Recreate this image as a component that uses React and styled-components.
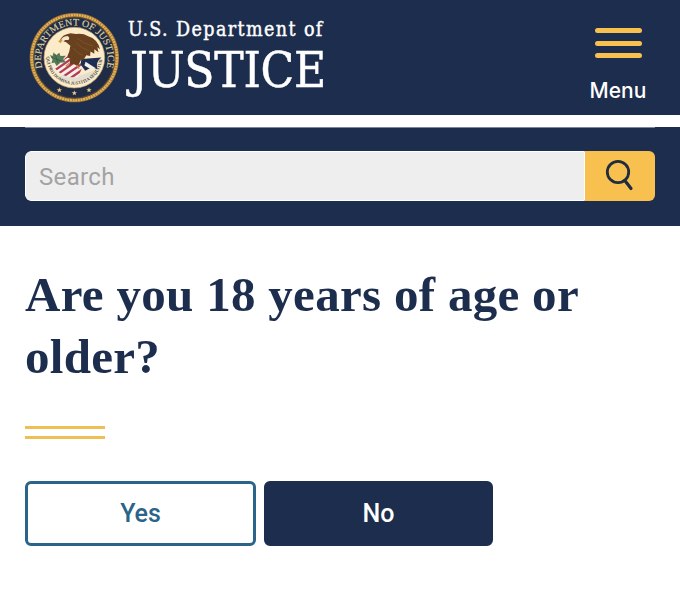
import React from "react";
import styled, { createGlobalStyle } from "styled-components";

const navy = "#1d2d4d";
const gold = "#f7c04f";

const GlobalStyle = createGlobalStyle`
  * { box-sizing: border-box; }
  body { margin: 0; background: #fff; }
`;

const Page = styled.div`
  width: 680px;
  height: 596px;
  overflow: hidden;
  background: #fff;
  font-family: "Roboto", "Liberation Sans", sans-serif;
`;

const Header = styled.header`
  height: 115px;
  display: flex;
  align-items: flex-start;
  background: ${navy};
  padding: 5px 0 0 20px;
`;

const SealArt = styled.svg`
  width: 110px;
  height: 105px;
  flex: none;
  display: block;
`;

const Brand = styled.div`
  display: flex;
  flex-direction: column;
  color: #fff;
  font-family: "DejaVu Serif Condensed", "DejaVu Serif", serif;
  font-stretch: condensed;
  white-space: nowrap;
  width: 440px;
`;

const Department = styled.span`
  height: 24px;
  margin: 13px 0 0 -2px;
  font-size: 19.5px;
  line-height: 24px;
  letter-spacing: 1.4px;
  -webkit-text-stroke: 0.4px #fff;
`;

const Justice = styled.span`
  height: 56px;
  margin-top: 1px;
  font-size: 49px;
  line-height: 56px;
  letter-spacing: -0.25px;
  -webkit-text-stroke: 0.5px #fff;
`;

const MenuButton = styled.button`
  display: flex;
  flex-direction: column;
  align-items: center;
  width: 60px;
  margin: 23px 0 0 18px;
  padding: 0;
  border: 0;
  background: none;
  color: #fff;
  font: 500 21px/28px "Inter", sans-serif;
`;

const Bars = styled.span`
  display: grid;
  gap: 7.5px;
  margin-bottom: 19px;
`;

const Bar = styled.span`
  width: 47px;
  height: 5px;
  border-radius: 3px;
  background: ${gold};
`;

const SearchPanel = styled.section`
  height: 99px;
  margin-top: 11.6px;
  background: ${navy};
  padding: 0 25px;
`;

const Rule = styled.div`
  height: 1px;
  background: #7c869b;
`;

const SearchForm = styled.form`
  display: flex;
  height: 50px;
  margin-top: 23.4px;
  border-radius: 6px;
  overflow: hidden;
`;

const SearchInput = styled.input`
  flex: 1;
  min-width: 0;
  border: 1px solid #fff;
  border-radius: 6px 0 0 6px;
  background: #eee;
  padding: 2px 13px 0;
  font: 400 24px "Roboto", sans-serif;
  letter-spacing: 0.35px;
  &::placeholder { color: #a3a3a3; opacity: 1; }
`;

const SearchButton = styled.button`
  width: 70px;
  padding: 0;
  border: 0;
  background: ${gold};
  svg { display: block; width: 70px; height: 50px; }
`;

const Main = styled.main`
  padding: 38.4px 25px 0;
`;

const Heading = styled.h1`
  margin: 0;
  color: ${navy};
  font: 700 49px/62px "Liberation Serif", serif;
  letter-spacing: 0.3px;
  white-space: nowrap;
`;

const Divider = styled.div`
  width: 80px;
  height: 13px;
  margin-top: 38px;
  border: solid #eebf55;
  border-width: 3px 0;
`;

const Actions = styled.div`
  display: flex;
  gap: 8px;
  margin-top: 42px;
`;

const Answer = styled.button`
  width: ${(p) => (p.$filled ? 229 : 231)}px;
  height: 65px;
  padding: 1px 0 0;
  border: 3px solid ${(p) => (p.$filled ? navy : "#2b648a")};
  border-radius: 6px;
  background: ${(p) => (p.$filled ? navy : "#fff")};
  color: ${(p) => (p.$filled ? "#fff" : "#2b648a")};
  font: 500 25px "Roboto", sans-serif;
`;

const Star = ({ x, y }) => (
  <path
    transform={`translate(${x} ${y})`}
    fill="#e8cc82"
    d="M0 -8 L2 -2.5 L8 -2.3 L3.2 1.2 L5 7 L0 3.6 L-5 7 L-3.2 1.2 L-8 -2.3 L-2 -2.5Z"
  />
);

function Seal() {
  return (
    <SealArt viewBox="0 0 330 315" role="img" aria-label="Department of Justice seal">
      <defs>
        <path id="outer" d="M67 189 A100 100 0 1 1 259 189" />
        <path id="inner" d="M79 155 A83 83 0 0 0 247 155" />
        <clipPath id="shield">
          <path d="M108 181 Q126 171 141 153 L190 164 L171 207 Q132 211 108 181Z" />
        </clipPath>
      </defs>
      <circle cx="163" cy="158" r="128" fill="#202b46" stroke="#9a6f2c" strokeWidth="12" />
      <circle cx="163" cy="158" r="128" fill="none" stroke="#e0b05c" strokeWidth="8" strokeDasharray="6 2" />
      <circle cx="163" cy="158" r="121" fill="none" stroke="#65502d" strokeWidth="2" />
      <circle cx="163" cy="158" r="91" fill="#fbebc8" stroke="#c0a367" strokeWidth="2" />
      <text fill="#ddd0a0" stroke="#ddd0a0" strokeWidth="0.4" fontFamily="Liberation Serif, serif" fontSize="29">
        <textPath href="#outer" textLength="370" lengthAdjust="spacingAndGlyphs">DEPARTMENT OF JUSTICE</textPath>
      </text>
      <g transform="translate(-21 -19) scale(1.14)">
        <path fill="#e4ded1" d="M123 203 Q155 196 177 202 L213 189 L204 209 Q165 225 127 211Z" />
        <g clipPath="url(#shield)">
          <path fill="#f5eee9" d="M90 140 H200 V220 H90Z" />
          <path
            fill="none"
            stroke="#b63b50"
            strokeWidth="6"
            d="M94 185 L145 151 M101 195 L160 154 M113 202 L174 159 M128 208 L188 167 M147 212 L200 175"
          />
        </g>
        <path fill="#1d2e54" d="M180 159 L233 155 Q217 166 222 186 L206 181 L190 190 L178 173Z" />
        <path fill="#f4efe4" d="M191 166 L218 183 L207 187 L188 176Z" />
        <path
          fill="#557b56"
          d="M97 148 L104 151 L107 141 L113 149 L122 142 L125 151 L139 150 L132 159 L140 168 L125 168 L115 177 L109 168 L101 170 L104 161Z"
        />
        <path fill="none" stroke="#2f5543" strokeWidth="2" d="M101 154 L128 164 M111 146 L118 169" />
        <path
          fill="#69411f"
          d="M123 110 Q130 94 151 91 L166 93 Q185 91 198 99 Q222 106 229 133 L222 128 L225 141 L214 133 L214 145 L204 139 L203 151 L193 149 L186 160 L178 163 L171 178 L158 171 L148 175 L151 158 L142 154 L148 139 L151 124 L139 114Z"
        />
        <path fill="none" stroke="#84602f" strokeWidth="1.5" d="M169 104 Q185 119 211 125 M166 116 Q181 132 201 137 M159 130 Q171 146 184 149" />
        <path fill="#f2e7cf" d="M124 111 Q129 99 143 98 Q151 101 146 109 L137 109 L127 119Z" />
        <path fill="#d79a32" d="M127 106 L119 112 L125 117 L131 109Z" />
        <path fill="none" stroke="#c18a3d" strokeWidth="4" d="M148 170 L139 178 M168 175 L174 184" />
      </g>
      <text fill="#474b51" fontFamily="Liberation Serif, serif" fontWeight="bold" fontSize="14">
        <textPath href="#inner" textLength="255" lengthAdjust="spacingAndGlyphs">QUI PRO DOMINA JUSTITIA SEQUITUR</textPath>
      </text>
      <Star x={118} y={255} />
      <Star x={163} y={264} />
      <Star x={207} y={255} />
    </SealArt>
  );
}

export default function App() {
  return (
    <Page>
      <GlobalStyle />
      <Header>
        <Seal />
        <Brand>
          <Department>U.S. Department of</Department>
          <Justice>JUSTICE</Justice>
        </Brand>
        <MenuButton>
          <Bars><Bar /><Bar /><Bar /></Bars>
          Menu
        </MenuButton>
      </Header>
      <SearchPanel>
        <Rule />
        <SearchForm>
          <SearchInput placeholder="Search" />
          <SearchButton type="button" aria-label="Search">
            <svg viewBox="0 0 70 50" fill="none" stroke="#1f2d3f" strokeLinecap="round">
              <circle cx="33" cy="21" r="10.7" strokeWidth="2.8" />
              <path d="M40 29.8 L46 37.5" strokeWidth="3.2" />
            </svg>
          </SearchButton>
        </SearchForm>
      </SearchPanel>
      <Main>
        <Heading>Are you 18 years of age or<br />older?</Heading>
        <Divider />
        <Actions>
          <Answer>Yes</Answer>
          <Answer $filled>No</Answer>
        </Actions>
      </Main>
    </Page>
  );
}
